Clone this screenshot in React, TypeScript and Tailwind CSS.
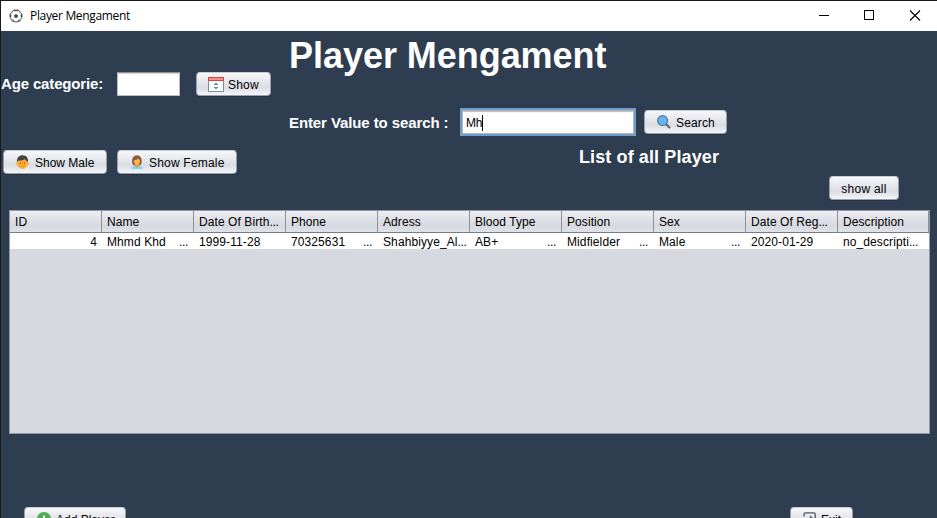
import type { ReactNode } from "react";

type ButtonProps = { className: string; children: ReactNode };

function MetalButton({ className, children }: ButtonProps) {
  return (
    <button
      className={`flex h-6 shrink-0 items-center rounded-[4px] border border-[#9a9ea8] border-t-[#c9ccd3] bg-linear-to-b from-[#f7f8fa] via-[#d9dce3] via-65% to-[#f4f6fb] text-left text-[12px] leading-[14px] whitespace-nowrap text-black shadow-[0_1px_0_#233242] ${className}`}
    >
      {children}
    </button>
  );
}

function BallIcon() {
  return (
    <svg width="14" height="14" viewBox="0 0 14 14">
      <circle cx="7" cy="7" r="5.9" fill="#fff" stroke="#777" strokeWidth="1.1" />
      <path d="M7 4.9 9.1 6.4 8.3 8.8H5.7L4.9 6.4Z" fill="#444" />
      <path d="M4.7 .9 7 2.3 9.3 .9ZM.8 5 2.4 6.6 1.3 9ZM13.2 5 11.6 6.6 12.7 9ZM3 11.8 4 10.6 5.6 12.8ZM11 11.8 10 10.6 8.4 12.8Z" fill="#555" stroke="#555" strokeWidth=".4" />
    </svg>
  );
}

function CalendarIcon() {
  return (
    <svg width="16" height="15" viewBox="0 0 16 15" shapeRendering="crispEdges">
      <rect x=".5" y=".5" width="15" height="14" fill="#fff" stroke="#7890a8" />
      <rect x=".5" y=".5" width="15" height="3" fill="#f58f8c" stroke="#c94848" />
      <path d="M6 8H10V7H9V6H7V7H6ZM6 10H10V11H9V12H7V11H6Z" fill="#6f8aa3" />
    </svg>
  );
}

function MagnifierIcon() {
  return (
    <svg width="14" height="14" viewBox="0 0 14 14">
      <path d="M9 9 13 13.2" stroke="#555b60" strokeWidth="1.9" />
      <circle cx="5.6" cy="5.6" r="4.9" fill="#64b5f6" stroke="#56788f" strokeWidth="1.2" />
    </svg>
  );
}

function BoyIcon() {
  return (
    <svg width="13" height="14" viewBox="0 0 13 14">
      <ellipse cx="6.5" cy="8.4" rx="5" ry="5.5" fill="#ffa92f" />
      <circle cx="1.2" cy="8.6" r="1.2" fill="#ffa726" />
      <circle cx="11.8" cy="8.6" r="1.2" fill="#ffa726" />
      <path d="M1 7.2C.6 2.8 3 .2 6.6 .2 10.5 .2 12.5 3 12 7.2L10.4 5.8 8.7 4.2C6.7 5.4 4 5.6 2.4 5.6Z" fill="#424242" />
      <path d="M4 8.2H5M8 8.2H9" stroke="#784719" strokeWidth="1" />
      <path d="M4.8 11.2Q6.5 12.2 8.2 11.2" fill="none" stroke="#e68e20" strokeWidth=".7" />
    </svg>
  );
}

function WomanIcon() {
  return (
    <svg width="12" height="14" viewBox="0 0 12 14">
      <path d="M1.4 9C.3 4 2 .2 6 .2 9.8 .2 11.3 3.8 10.4 9L8.2 10.8H3.8Z" fill="#8d5a40" />
      <path d="M.3 14C.5 11 3 10.3 6 10.3S11.5 11 11.7 14Z" fill="#81d4fa" />
      <path d="M4.2 9H7.8V11L6 13 4.2 11Z" fill="#ff9800" />
      <path d="M3 5.3C4.8 5 6.2 4.3 7 3.4L9 5.4C9 8.5 7.7 10.3 6 10.3S3 8.5 3 5.3Z" fill="#ffb74d" />
    </svg>
  );
}

function PlusIcon() {
  return (
    <svg width="14" height="14" viewBox="0 0 14 14">
      <circle cx="7" cy="7" r="7" fill="#4caf50" />
      <path d="M7 3.5V10.5M3.5 7H10.5" stroke="#fff" strokeWidth="2" />
    </svg>
  );
}

function ExitIcon() {
  return (
    <svg width="13" height="14" viewBox="0 0 13 14" fill="none" stroke="#555" strokeWidth="1.3">
      <path d="M1 4.5V2.2Q1 .8 2.4 .8H10.8Q12.2 .8 12.2 2.2V11.8Q12.2 13.2 10.8 13.2H2.4Q1 13.2 1 11.8V9.5" />
      <path d="M4 7H10" strokeWidth="2" />
      <path d="M7.2 3.8 10.5 7 7.2 10.2Z" fill="#555" strokeWidth=".5" />
    </svg>
  );
}

const columns = [
  { head: "ID", value: "4", more: false },
  { head: "Name", value: "Mhmd Khd", more: true },
  { head: "Date Of Birth...", value: "1999-11-28", more: false },
  { head: "Phone", value: "70325631", more: true },
  { head: "Adress", value: "Shahbiyye_Al...", more: false },
  { head: "Blood Type", value: "AB+", more: true },
  { head: "Position", value: "Midfielder", more: true },
  { head: "Sex", value: "Male", more: true },
  { head: "Date Of Reg...", value: "2020-01-29", more: false },
  { head: "Description", value: "no_descripti...", more: false },
];

function CellText({ text }: { text: string }) {
  const clipped = text.endsWith("...");
  return (
    <span>
      {clipped ? text.slice(0, -3) : text}
      {clipped && <span className="tracking-[-0.33px]">...</span>}
    </span>
  );
}

function PlayerTable() {
  return (
    <div className="ml-[8px] h-[224px] w-[921px] shrink-0 border border-[#9297a1] bg-[#d6d9e0] text-[12px] whitespace-nowrap text-black">
      <div className="grid h-[22px] grid-cols-[repeat(9,92px)_91px] border-b border-[#777d88] bg-linear-to-b from-[#ececf1] via-[#d6d9e0] via-70% to-[#dfe2e9]">
        {columns.map((c) => (
          <div key={c.head} className="border-r border-[#8c919b] pt-[4px] pl-[5px] leading-[14px] tracking-[0.08px]">
            <CellText text={c.head} />
          </div>
        ))}
      </div>
      <div className="grid h-4 grid-cols-[repeat(9,92px)_91px] bg-white">
        {columns.map((c, i) => (
          <div
            key={c.head}
            className={`flex pt-[2px] pl-[5px] leading-[14px] tracking-[0.1px] ${i === 0 ? "justify-end pr-[5px]" : "justify-between pr-[6px]"}`}
          >
            <CellText text={c.value} />
            {c.more && <span className="tracking-[-0.33px]">...</span>}
          </div>
        ))}
      </div>
    </div>
  );
}

export default function App() {
  return (
    <div className="flex h-[518px] w-[937px] flex-col overflow-hidden border-t border-l border-[#1a1a1c] bg-[#2e3e50] font-['Liberation_Sans',Arial,sans-serif] text-white">
      <header className="flex h-[30px] shrink-0 items-center bg-white pl-[8px] text-black">
        <BallIcon />
        <span className="ml-[7px] font-['Open_Sans','Noto_Sans',sans-serif] text-[12px] leading-[16px] tracking-[-0.33px]">
          Player Mengament
        </span>
        <svg className="ml-auto" width="119" height="30" viewBox="0 0 119 30" fill="none" stroke="#000">
          <path d="M1 14.5H11" />
          <rect x="46.5" y="9.5" width="9" height="9" />
          <path d="M92 9.5 102 19.5M102 9.5 92 19.5" strokeWidth="1.1" />
        </svg>
      </header>

      <section className="flex h-[116px] shrink-0">
        <div className="flex w-[288px] pt-[41px]">
          <span className="w-[116px] pt-[3px] text-[15px] leading-[18px] font-bold tracking-[-0.15px] whitespace-nowrap">Age categorie:</span>
          <div className="h-6 w-[63px] border border-[#b9bcc2] border-t-[#8e8f8f] bg-white shadow-[inset_0_1px_1px_#d5d5d5]" />
          <MetalButton className="ml-[16px] w-[75px] pl-[11px]">
            <CalendarIcon />
            <span className="ml-[4px] pt-px tracking-[0.2px]">Show</span>
          </MetalButton>
        </div>
        <div>
          <h1 className="pt-[4px] text-[36px] leading-[42px] font-bold tracking-[-0.04px] whitespace-nowrap">Player Mengament</h1>
          <div className="mt-[31px] flex">
            <label className="w-[171px] pt-[6px] text-[15px] leading-[18px] font-bold tracking-[-0.1px] whitespace-nowrap">
              Enter Value to search :
            </label>
            <div className="flex h-[28px] w-[176px] border-2 border-[#6f9dcc] bg-white pt-[6px] pl-[4px] text-[12px] leading-[14px] text-black shadow-[inset_0_0_0_1px_#b8b4b2,inset_0_2px_1px_#bbb]">
              <span className="tracking-[-0.3px]">Mh</span>
              <span className="-mt-px h-[16px] w-px bg-black" />
            </div>
            <MetalButton className="mt-[2px] ml-[8px] w-[83px] pl-[12px]">
              <MagnifierIcon />
              <span className="ml-[5px] pt-px tracking-[0.15px]">Search</span>
            </MetalButton>
          </div>
        </div>
      </section>

      <section className="flex h-[63px] shrink-0 pl-[2px]">
        <MetalButton className="mt-[3px] w-[104px] pl-[12px]">
          <BoyIcon />
          <span className="ml-[6px] pt-px">Show Male</span>
        </MetalButton>
        <MetalButton className="mt-[3px] ml-[10px] w-[120px] pl-[13px]">
          <WomanIcon />
          <span className="ml-[6px] pt-px tracking-[0.2px]">Show Female</span>
        </MetalButton>
        <h2 className="ml-[342px] text-[18px] leading-[20px] font-bold tracking-[0.11px] whitespace-nowrap">List of all Player</h2>
        <MetalButton className="mt-[29px] ml-auto mr-[38px] w-[70px] justify-center">
          <span className="pt-px tracking-[0.25px]">show all</span>
        </MetalButton>
      </section>

      <PlayerTable />

      <footer className="mt-[73px] flex shrink-0 justify-between pr-[84px] pl-[23px]">
        <MetalButton className="w-[102px] pl-[12px]">
          <PlusIcon />
          <span className="ml-[5px] pt-px">Add Player</span>
        </MetalButton>
        <MetalButton className="w-[63px] pl-[12px]">
          <ExitIcon />
          <span className="ml-[5px] pt-px">Exit</span>
        </MetalButton>
      </footer>
    </div>
  );
}
